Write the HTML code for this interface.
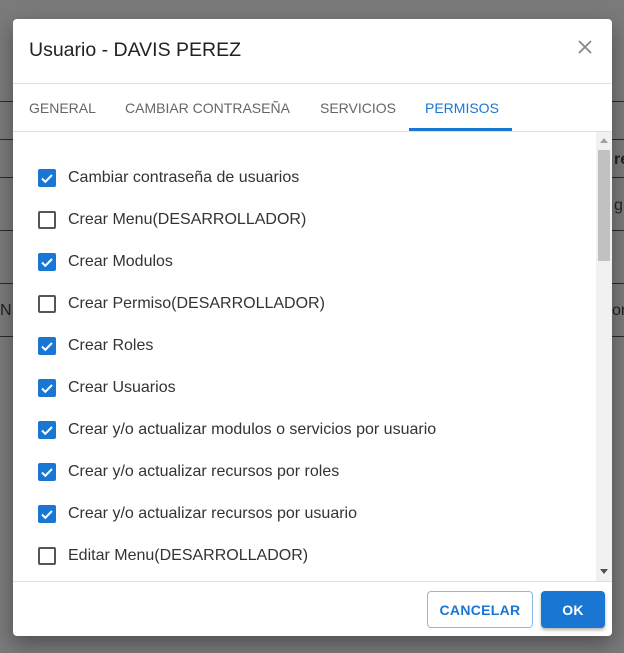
<!DOCTYPE html>
<html><head><meta charset="utf-8"><style>
*{box-sizing:border-box;margin:0;padding:0}
body{width:624px;height:653px;background:#7a7a7a;position:relative;overflow:hidden;font-family:"Liberation Sans",Roboto,sans-serif}
.hl{position:absolute;height:1px;background:#2a2a2a}
.bg{position:absolute;font-size:16px;color:#222}
.dlg{position:absolute;left:13px;top:19px;width:599px;height:617px;background:#fff;border-radius:4px;box-shadow:0 8px 20px rgba(0,0,0,.35);overflow:hidden}
.title{position:absolute;left:16px;top:20px;font-size:19.5px;color:#222}
.close{position:absolute;left:563px;top:19px}
.d1{position:absolute;left:0;top:64px;width:599px;height:1px;background:#e0e0e0}
.tab{position:absolute;top:81px;font-size:14px;color:#666;letter-spacing:0}
.ind{position:absolute;left:396px;top:109px;width:103px;height:3px;background:#1976d2}
.d2{position:absolute;left:0;top:112px;width:599px;height:1px;background:#e0e0e0}
.row{position:absolute;left:25px;height:20px;display:flex;align-items:center}
.cb{width:18px;height:18px;border-radius:2px;margin-right:12px;flex:none}
.on{background:#1976d2}
.off{border:2px solid #555}
.row span{font-size:16px;color:#333}
.sb{position:absolute;left:583px;top:113px;width:16px;height:449px;background:#f1f1f1}
.thumb{position:absolute;left:2px;top:18px;width:12px;height:111px;background:#c1c1c1}
.d3{position:absolute;left:0;top:562px;width:599px;height:1px;background:#e0e0e0}
.btn{position:absolute;top:572px;height:37px;border-radius:4px;font-size:14px;font-weight:bold;letter-spacing:.3px;display:flex;align-items:center;justify-content:center}
</style></head><body>
<div class="hl" style="left:0;top:101px;width:624px"></div>
<div class="hl" style="left:0;top:139px;width:624px"></div>
<div class="hl" style="left:0;top:177px;width:624px"></div>
<div class="hl" style="left:0;top:230px;width:624px"></div>
<div class="hl" style="left:0;top:283px;width:624px"></div>
<div class="hl" style="left:0;top:336px;width:624px"></div>
<div class="bg" style="left:614px;top:151px;font-weight:bold">re</div>
<div class="bg" style="left:614px;top:197px">g</div>
<div class="bg" style="left:0;top:302px">N</div>
<div class="bg" style="left:612px;top:302px">on</div>
<div class="dlg">
<div class="title">Usuario - DAVIS PEREZ</div>
<svg class="close" width="18" height="18" viewBox="0 0 18 18"><path d="M3 3L15 15M15 3L3 15" stroke="#888" stroke-width="1.8"/></svg>
<div class="d1"></div>
<div class="tab" style="left:16px">GENERAL</div>
<div class="tab" style="left:112px">CAMBIAR CONTRASEÑA</div>
<div class="tab" style="left:307px">SERVICIOS</div>
<div class="tab" style="left:412px;color:#1976d2">PERMISOS</div>
<div class="ind"></div>
<div class="d2"></div>
<div class="row" style="top:149px"><div class="cb on"><svg width="18" height="18"><path d="M4 9.5l3.3 3.3L14 6" stroke="#fff" stroke-width="2" fill="none"/></svg></div><span>Cambiar contraseña de usuarios</span></div>
<div class="row" style="top:191px"><div class="cb off"></div><span>Crear Menu(DESARROLLADOR)</span></div>
<div class="row" style="top:233px"><div class="cb on"><svg width="18" height="18"><path d="M4 9.5l3.3 3.3L14 6" stroke="#fff" stroke-width="2" fill="none"/></svg></div><span>Crear Modulos</span></div>
<div class="row" style="top:275px"><div class="cb off"></div><span>Crear Permiso(DESARROLLADOR)</span></div>
<div class="row" style="top:317px"><div class="cb on"><svg width="18" height="18"><path d="M4 9.5l3.3 3.3L14 6" stroke="#fff" stroke-width="2" fill="none"/></svg></div><span>Crear Roles</span></div>
<div class="row" style="top:359px"><div class="cb on"><svg width="18" height="18"><path d="M4 9.5l3.3 3.3L14 6" stroke="#fff" stroke-width="2" fill="none"/></svg></div><span>Crear Usuarios</span></div>
<div class="row" style="top:401px"><div class="cb on"><svg width="18" height="18"><path d="M4 9.5l3.3 3.3L14 6" stroke="#fff" stroke-width="2" fill="none"/></svg></div><span>Crear y/o actualizar modulos o servicios por usuario</span></div>
<div class="row" style="top:443px"><div class="cb on"><svg width="18" height="18"><path d="M4 9.5l3.3 3.3L14 6" stroke="#fff" stroke-width="2" fill="none"/></svg></div><span>Crear y/o actualizar recursos por roles</span></div>
<div class="row" style="top:485px"><div class="cb on"><svg width="18" height="18"><path d="M4 9.5l3.3 3.3L14 6" stroke="#fff" stroke-width="2" fill="none"/></svg></div><span>Crear y/o actualizar recursos por usuario</span></div>
<div class="row" style="top:527px"><div class="cb off"></div><span>Editar Menu(DESARROLLADOR)</span></div>
<div class="sb"><svg style="position:absolute;left:4px;top:6px" width="8" height="5"><path d="M0 5L4 0L8 5Z" fill="#a0a0a0"/></svg><div class="thumb"></div><svg style="position:absolute;left:4px;top:437px" width="8" height="5"><path d="M0 0L8 0L4 5Z" fill="#505050"/></svg></div>
<div class="d3"></div>
<div class="btn" style="left:414px;width:106px;border:1px solid #8db9e6;color:#1976d2">CANCELAR</div>
<div class="btn" style="left:528px;width:64px;background:#1976d2;color:#fff;box-shadow:0 2px 3px rgba(0,0,0,.3)">OK</div>
</div>
</body></html>
